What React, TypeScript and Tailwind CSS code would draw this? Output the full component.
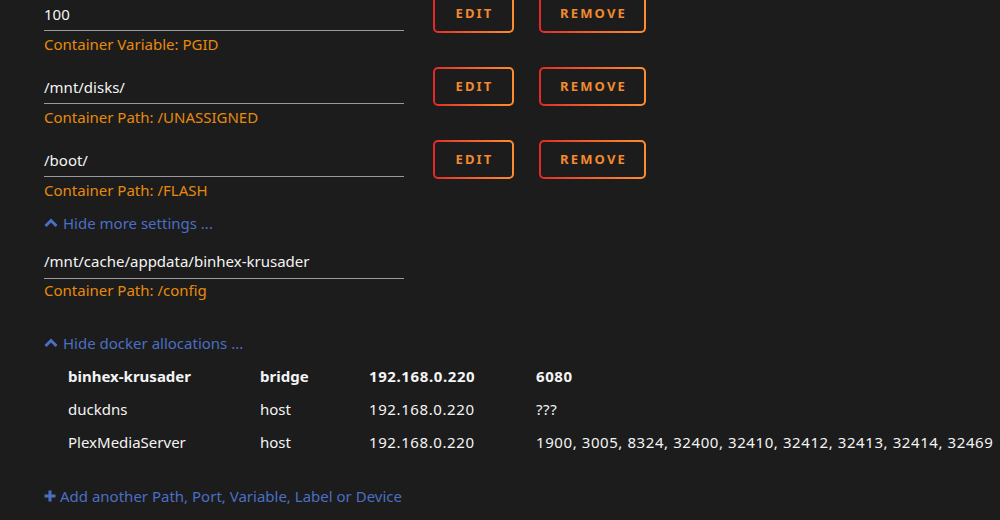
import React from "react";

const font = { fontFamily: '"Noto Sans", "Open Sans", sans-serif' };

function Btn({ label, w }: { label: string; w: string }) {
  return (
    <div className={`${w} h-[39px] rounded-[5px] p-[2px] bg-gradient-to-r from-[#e22828] to-[#ff8d2f]`}>
      <div className="w-full h-full rounded-[3px] bg-[#1c1c1c] flex items-center justify-center">
        <span className="text-[13px] font-bold tracking-[2.2px] text-[#f38a2f] pl-[2px]">{label}</span>
      </div>
    </div>
  );
}

function Row({ value, label }: { value: string; label: string }) {
  return (
    <div className="flex items-start h-[73px]">
      <div className="w-[360px]">
        <div className="pt-[10px] pb-[6px] border-b border-[#9a9a9a] text-[15px] leading-[20px] text-[#f4f4f4]">{value}</div>
        <div className="mt-[3px] text-[15px] leading-[20px] text-[#e68a0e]">{label}</div>
      </div>
      <div className="ml-[29px] flex gap-[25px]">
        <Btn label="EDIT" w="w-[81px]" />
        <Btn label="REMOVE" w="w-[107px]" />
      </div>
    </div>
  );
}

function Chevron() {
  return (
    <svg width="14" height="10" viewBox="0 0 14 10" className="mr-[5px]">
      <path d="M1.5 8 L7 2.5 L12.5 8" fill="none" stroke="#4a6fc4" strokeWidth="3" />
    </svg>
  );
}

export default function App() {
  const rows = [
    { n: "binhex-krusader", net: "bridge", ip: "192.168.0.220", ports: "6080", bold: true },
    { n: "duckdns", net: "host", ip: "192.168.0.220", ports: "???", bold: false },
    { n: "PlexMediaServer", net: "host", ip: "192.168.0.220", ports: "1900, 3005, 8324, 32400, 32410, 32412, 32413, 32414, 32469", bold: false },
  ];
  return (
    <div className="w-[1000px] h-[520px] overflow-hidden bg-[#1c1c1c]" style={font}>
      <div className="pl-[44px] -mt-[6px]">
        <Row value="100" label="Container Variable: PGID" />
        <Row value="/mnt/disks/" label="Container Path: /UNASSIGNED" />
        <Row value="/boot/" label="Container Path: /FLASH" />
        <div className="-mt-[14px] pt-[14px] flex items-center text-[15px] leading-[20px] text-[#4a6fc4]">
          <Chevron />
          Hide more settings ...
        </div>
        <div className="w-[360px] mt-[8px]">
          <div className="pt-[10px] pb-[7px] border-b border-[#9a9a9a] text-[15px] leading-[20px] text-[#f4f4f4]">/mnt/cache/appdata/binhex-krusader</div>
          <div className="mt-[1px] text-[15px] leading-[20px] text-[#e68a0e]">Container Path: /config</div>
        </div>
        <div className="mt-[33px] flex items-center text-[15px] leading-[20px] text-[#4a6fc4]">
          <Chevron />
          Hide docker allocations ...
        </div>
        <div className="mt-[7px] pl-[24px] text-[15px] text-[#f4f4f4]">
          {rows.map((r) => (
            <div key={r.n} className={`flex h-[33px] items-center ${r.bold ? "font-bold" : ""}`}>
              <div className="w-[192px]">{r.n}</div>
              <div className="w-[109px]">{r.net}</div>
              <div className="w-[167px] tracking-[0.6px]">{r.ip}</div>
              <div className="whitespace-nowrap tracking-[0.58px]">{r.ports}</div>
            </div>
          ))}
        </div>
        <div className="mt-[27px] flex items-center text-[15px] leading-[20px] text-[#4a6fc4]">
          <svg width="12" height="12" viewBox="0 0 12 12" className="mr-[4px]">
            <path d="M6 0.5 V11.5 M0.5 6 H11.5" stroke="#4a6fc4" strokeWidth="3" />
          </svg>
          Add another Path, Port, Variable, Label or Device
        </div>
      </div>
    </div>
  );
}
